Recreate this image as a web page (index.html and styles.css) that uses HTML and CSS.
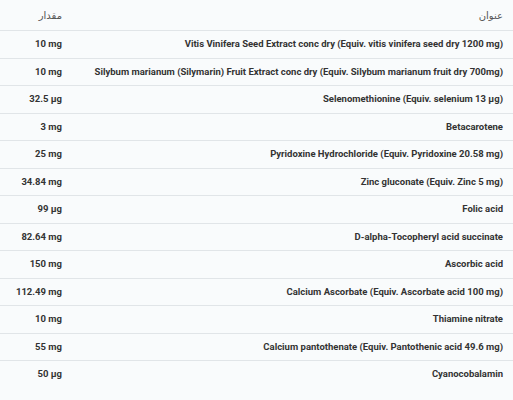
FILE: index.html
```html
<!DOCTYPE html>
<html lang="fa" dir="rtl">
<head>
<meta charset="utf-8">
<link rel="stylesheet" href="styles.css">
</head>
<body>
<table class="ing">
  <thead>
    <tr><th class="name">عنوان</th><th class="amt">مقدار</th></tr>
  </thead>
  <tbody>
    <tr><td class="name" dir="ltr">Vitis Vinifera Seed Extract conc dry (Equiv. vitis vinifera seed dry 1200 mg)</td><td class="amt" dir="ltr">10 mg</td></tr>
    <tr><td class="name" dir="ltr">Silybum marianum (Silymarin) Fruit Extract conc dry (Equiv. Silybum marianum fruit dry 700mg)</td><td class="amt" dir="ltr">10 mg</td></tr>
    <tr><td class="name" dir="ltr">Selenomethionine (Equiv. selenium 13 µg)</td><td class="amt" dir="ltr">32.5 µg</td></tr>
    <tr><td class="name" dir="ltr">Betacarotene</td><td class="amt" dir="ltr">3 mg</td></tr>
    <tr><td class="name" dir="ltr">Pyridoxine Hydrochloride (Equiv. Pyridoxine 20.58 mg)</td><td class="amt" dir="ltr">25 mg</td></tr>
    <tr><td class="name" dir="ltr">Zinc gluconate (Equiv. Zinc 5 mg)</td><td class="amt" dir="ltr">34.84 mg</td></tr>
    <tr><td class="name" dir="ltr">Folic acid</td><td class="amt" dir="ltr">99 µg</td></tr>
    <tr><td class="name" dir="ltr">D-alpha-Tocopheryl acid succinate</td><td class="amt" dir="ltr">82.64 mg</td></tr>
    <tr><td class="name" dir="ltr">Ascorbic acid</td><td class="amt" dir="ltr">150 mg</td></tr>
    <tr><td class="name" dir="ltr">Calcium Ascorbate (Equiv. Ascorbate acid 100 mg)</td><td class="amt" dir="ltr">112.49 mg</td></tr>
    <tr><td class="name" dir="ltr">Thiamine nitrate</td><td class="amt" dir="ltr">10 mg</td></tr>
    <tr><td class="name" dir="ltr">Calcium pantothenate (Equiv. Pantothenic acid 49.6 mg)</td><td class="amt" dir="ltr">55 mg</td></tr>
    <tr><td class="name" dir="ltr">Cyanocobalamin</td><td class="amt" dir="ltr">50 µg</td></tr>
  </tbody>
</table>
</body>
</html>
```
FILE: styles.css
```css
html, body {
  margin: 0;
  padding: 0;
  background: #f9fbfc;
}
body {
  font-family: Roboto, "DejaVu Sans", sans-serif;
  color: #333;
}
.ing {
  width: 100%;
  border-collapse: collapse;
}
.ing th {
  font-family: "DejaVu Sans", sans-serif;
  font-weight: normal;
  font-size: 10px;
  color: #555;
  text-align: right;
  padding: 10px 10px 9px;
  line-height: 11px;
  border-bottom: 1px solid #e1e5e8;
}
.ing td {
  font-size: 9.5px;
  font-weight: 700;
  line-height: 10.5px;
  padding: 8px 10px;
  text-align: right;
  border-bottom: 1px solid #e1e5e8;
  white-space: nowrap;
}
.ing tbody tr:last-child td {
  border-bottom: none;
}
.ing .amt {
  width: 52px;
}
```
